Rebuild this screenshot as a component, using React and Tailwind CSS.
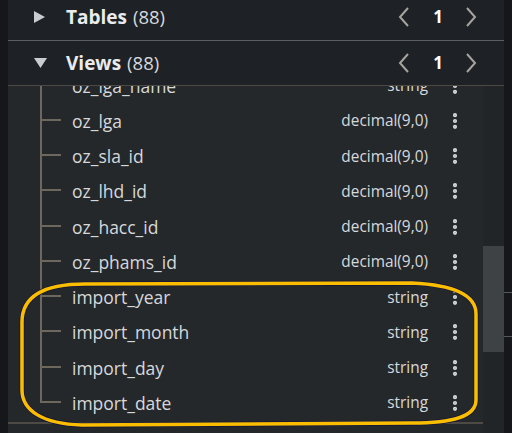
import { EllipsisVertical } from 'lucide-react';

const columns = [
    { name: 'oz_lga_name', type: 'string' },
    { name: 'oz_lga', type: 'decimal(9,0)' },
    { name: 'oz_sla_id', type: 'decimal(9,0)' },
    { name: 'oz_lhd_id', type: 'decimal(9,0)' },
    { name: 'oz_hacc_id', type: 'decimal(9,0)' },
    { name: 'oz_phams_id', type: 'decimal(9,0)' },
    { name: 'import_year', type: 'string' },
    { name: 'import_month', type: 'string' },
    { name: 'import_day', type: 'string' },
    { name: 'import_date', type: 'string' },
];

const outline =
    'M 85 284 L 412 283 C 455 285, 476 295, 476 314 L 476 400 C 476 417, 452 423, 412 423 L 82 425 C 42 424, 22 410, 22 390 L 22 322 C 22 296, 44 284, 85 284 Z';

function Pager() {
    return (
        <div className="ml-auto flex items-center">
            <svg width="14" height="22" viewBox="0 0 14 22" className="mr-[20px]">
                <polyline points="11,2 3,11 11,20" fill="none" stroke="#a7a39d" strokeWidth="2" />
            </svg>
            <span className="w-[14px] text-center text-[17px] font-bold text-white">1</span>
            <svg width="14" height="22" viewBox="0 0 14 22" className="ml-[19px] mr-[26px]">
                <polyline points="3,2 11,11 3,20" fill="none" stroke="#a7a39d" strokeWidth="2" />
            </svg>
        </div>
    );
}

function SectionHeader({ label, count, open, className }) {
    return (
        <div className={`flex items-center ${className}`}>
            <div className="w-[40px] pl-[26px] flex items-center">
                {open ? (
                    <svg width="13" height="11" viewBox="0 0 13 11">
                        <polygon points="0,0 13,0 6.5,10" fill="#c9ccd0" />
                    </svg>
                ) : (
                    <svg width="11" height="12" viewBox="0 0 11 12">
                        <polygon points="0,0 11,6 0,12" fill="#c9ccd0" />
                    </svg>
                )}
            </div>
            <span className="ml-[18px] text-[19px] font-bold text-[#e9ebed]">{label}</span>
            <span className="ml-[6px] text-[18.5px] text-[#d5d9dc]">({count})</span>
            <Pager />
        </div>
    );
}

function ColumnRow({ name, type, last }) {
    return (
        <div className="flex items-center h-[35.25px]">
            <div className="ml-[32px] w-[21px] h-full flex flex-col">
                <div className="h-1/2 border-l-2 border-b-2 border-[#6e675e]" />
                <div className={`h-1/2 ${last ? '' : 'border-l-2 border-[#6e675e]'}`} />
            </div>
            <span className="ml-[11px] text-[17.5px] text-[#d5d9dc]">{name}</span>
            <span className="ml-auto mr-[17px] text-[15.4px] text-[#d5d9dc]">{type}</span>
            <EllipsisVertical size={20} strokeWidth={3} className="text-[#d5d9dc] mr-[18px]" />
        </div>
    );
}

export default function App() {
    return (
        <div
            className="relative w-[512px] h-[433px] overflow-hidden flex bg-[#15171a]"
            style={{ fontFamily: '"Open Sans", "Noto Sans", sans-serif' }}
        >
            <div className="w-[8px] shrink-0" />
            <div className="w-[496px] flex flex-col bg-[#1e2125]">
                <SectionHeader label="Tables" count={88} className="h-[40px] pb-[6px]" />
                <div className="h-px bg-[#5a5e62]" />
                <SectionHeader label="Views" count={88} open className="h-[44px]" />
                <div className="h-px bg-[#4d4944]" />
                <div className="flex-1 flex overflow-hidden">
                    <div className="flex-1 overflow-hidden bg-[#25282b]">
                        <div className="mt-[-18px]">
                            {columns.map((c, i) => (
                                <ColumnRow key={c.name} {...c} last={i === columns.length - 1} />
                            ))}
                            <div className="h-[2px] bg-[#4d4944] mt-[1px]" />
                            <div className="flex items-center h-[30px] pl-[22px]">
                                <div className="w-[18px] h-[14px] mt-[14px] rounded-[2px] bg-[#c9ccd0]" />
                            </div>
                        </div>
                    </div>
                    <div className="w-[21px] bg-[#222528] pt-[160px]">
                        <div className="h-[106px] bg-[#3e4245]" />
                    </div>
                </div>
            </div>
            <div className="w-[8px] shrink-0 flex flex-col">
                <div className="h-[292px]" />
                <div className="h-px bg-[#55585b]" />
                <div className="h-[43px]" />
                <div className="h-px bg-[#55585b]" />
            </div>
            <svg className="absolute inset-0 pointer-events-none" width="512" height="433" viewBox="0 0 512 433">
                <path d={outline} fill="none" stroke="#15163a" strokeWidth="5" />
                <path d={outline} fill="none" stroke="#fbbd00" strokeWidth="3.5" />
            </svg>
        </div>
    );
}
